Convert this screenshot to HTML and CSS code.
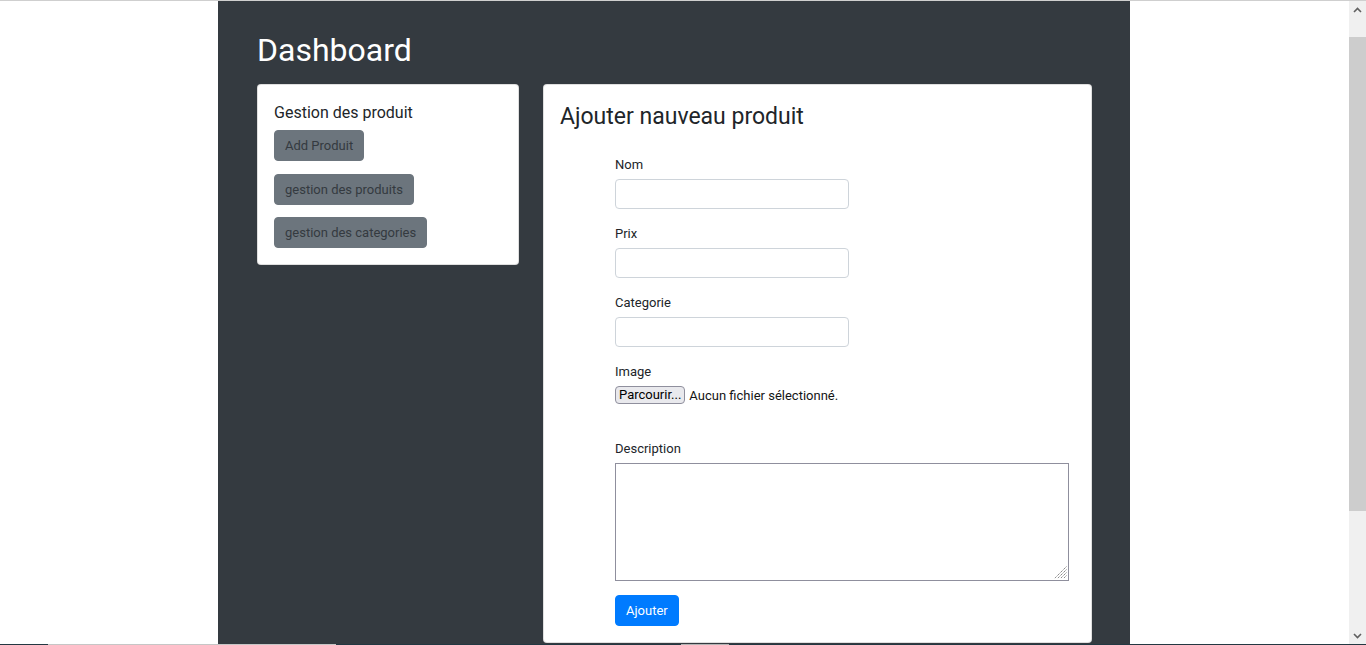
FILE: index.html
```html
<!DOCTYPE html>
<html lang="fr">
<head>
<meta charset="utf-8">
<title>Dashboard</title>
<link rel="stylesheet" href="styles.css">
</head>
<body>
<div class="screen">
  <div class="topline"></div>
  <div class="viewport">
    <main class="page">
      <div class="dash">
        <h1 class="dash-title">Dashboard</h1>
        <div class="cards">
          <aside class="card card-side">
            <h5 class="side-title">Gestion des produit</h5>
            <div class="side-actions">
              <a class="btn btn-secondary" href="#">Add Produit</a>
              <a class="btn btn-secondary" href="#">gestion des produits</a>
              <a class="btn btn-secondary" href="#">gestion des categories</a>
            </div>
          </aside>
          <section class="card card-form">
            <h3 class="form-title">Ajouter nauveau produit</h3>
            <form class="form">
              <div class="field">
                <label class="label">Nom</label>
                <input class="input" type="text">
              </div>
              <div class="field">
                <label class="label">Prix</label>
                <input class="input" type="text">
              </div>
              <div class="field">
                <label class="label">Categorie</label>
                <input class="input" type="text">
              </div>
              <div class="field">
                <label class="label">Image</label>
                <div class="file-row">
                  <button type="button" class="file-btn">Parcourir...</button>
                  <span class="file-name">Aucun fichier sélectionné.</span>
                </div>
              </div>
              <div class="field field-desc">
                <label class="label">Description</label>
                <div class="textarea-wrap">
                  <textarea class="textarea"></textarea>
                  <svg class="grip" viewBox="0 0 14 14" width="14" height="14" aria-hidden="true">
                    <path d="M13.5 1.5 L1.5 13.5 M13.5 4.5 L4.5 13.5 M13.5 7.5 L7.5 13.5 M13.5 10.5 L10.5 13.5" stroke="#8a8a8a" stroke-width="1" stroke-dasharray="1.5 0.6" fill="none"/>
                  </svg>
                </div>
              </div>
              <button type="button" class="btn btn-primary submit">Ajouter</button>
            </form>
          </section>
        </div>
      </div>
    </main>
    <div class="scrollbar">
      <div class="sb-btn">
        <svg width="9" height="6" viewBox="0 0 9 6" aria-hidden="true"><path d="M1 5 L4.5 1.5 L8 5" stroke="#606060" stroke-width="1.6" fill="none"/></svg>
      </div>
      <div class="sb-track"><div class="sb-thumb"></div></div>
      <div class="sb-btn">
        <svg width="9" height="6" viewBox="0 0 9 6" aria-hidden="true"><path d="M1 1 L4.5 4.5 L8 1" stroke="#606060" stroke-width="1.6" fill="none"/></svg>
      </div>
    </div>
  </div>
  <div class="taskline"></div>
</div>
</body>
</html>
```

FILE: styles.css
```css
* { box-sizing: border-box; }

html, body {
  margin: 0;
  height: 100%;
}

body {
  font-family: Roboto, "Segoe UI", sans-serif;
  color: #212529;
  background: #fff;
  overflow: hidden;
}

.screen {
  display: flex;
  flex-direction: column;
  height: 645px;
}

.topline {
  flex: none;
  height: 1px;
  background: #cfcfcf;
}

.viewport {
  flex: 1;
  min-height: 0;
  display: flex;
}

.page {
  flex: 1;
  min-width: 0;
  overflow: hidden;
  background: #fff;
}

.dash {
  width: 912px;
  height: 100%;
  margin-left: 218px;
  padding: 30px 38px 0 39px;
  background: #343a40;
}

.dash-title {
  margin: 0 0 15px;
  font-size: 32px;
  line-height: 38px;
  font-weight: 400;
  color: #fff;
}

.cards {
  display: flex;
  align-items: flex-start;
  gap: 24px;
}

.card {
  background: #fff;
  border: 1px solid rgba(0, 0, 0, 0.125);
  border-radius: 4px;
  padding: 16px;
}

.card-side { width: 262px; }
.card-form { width: 549px; }

.side-title {
  margin: 0 0 5px;
  font-size: 16px;
  line-height: 24px;
  font-weight: 400;
}

.side-actions {
  display: flex;
  flex-direction: column;
  align-items: flex-start;
  gap: 12.5px;
}

.btn {
  display: inline-block;
  font-family: inherit;
  font-size: 13px;
  line-height: 19px;
  padding: 5px 10px;
  border: 1px solid transparent;
  border-radius: 4px;
  text-decoration: none;
  cursor: pointer;
}

.btn-secondary {
  background: #6c757d;
  border-color: #6c757d;
  color: #343a40;
}

.btn-primary {
  background: #007bff;
  border-color: #007bff;
  color: #fff;
}

.form-title {
  margin: 0;
  font-size: 23px;
  line-height: 31px;
  font-weight: 400;
}

.form {
  display: flex;
  flex-direction: column;
  margin: 23px 0 0;
  padding-left: 55px;
}

.field {
  display: flex;
  flex-direction: column;
  align-items: flex-start;
}

.field + .field { margin-top: 15px; }
.field.field-desc { margin-top: 35px; }

.label {
  font-size: 13px;
  line-height: 20px;
  margin-bottom: 4px;
}

.input {
  width: 234px;
  height: 30px;
  margin: 0;
  border: 1px solid #ced4da;
  border-radius: 4px;
  background: #fff;
}

.file-row {
  display: flex;
  align-items: center;
  gap: 4px;
  height: 18px;
  font-size: 13px;
  color: #151515;
}

.file-btn {
  height: 18px;
  margin: 0;
  padding: 0 3px;
  font-family: inherit;
  font-size: 13px;
  line-height: 16px;
  color: #000;
  background: #e9e9ed;
  border: 1px solid #8f8f9d;
  border-radius: 4px;
}

.textarea-wrap {
  position: relative;
  width: 454px;
  height: 118px;
}

.textarea {
  display: block;
  width: 100%;
  height: 100%;
  margin: 0;
  border: 1px solid #8f8f9d;
  border-radius: 0;
  resize: none;
  background: #fff;
}

.grip {
  position: absolute;
  right: 2px;
  bottom: 2px;
}

.submit {
  align-self: flex-start;
  margin-top: 14px;
}

.scrollbar {
  flex: none;
  width: 17px;
  display: flex;
  flex-direction: column;
  background: #f0f0f0;
}

.sb-btn {
  flex: none;
  height: 17px;
  display: flex;
  align-items: center;
  justify-content: center;
}

.sb-track {
  flex: 1;
  padding-top: 19px;
}

.sb-thumb {
  height: 474px;
  background: #cdcdcd;
}

.taskline {
  flex: none;
  height: 1px;
  background: linear-gradient(to right,
    #233842 0 48px,
    #c6c6c6 48px 336px,
    #233842 336px 681px,
    #b4b4b4 681px 729px,
    #233842 729px);
}
```
